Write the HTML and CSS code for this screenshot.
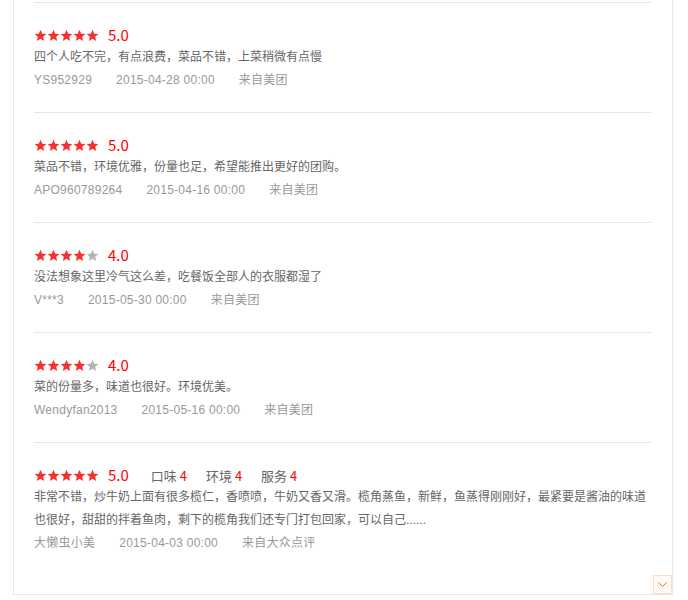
FILE: index.html
```html
<!DOCTYPE html>
<html lang="zh-CN">
<head>
<meta charset="utf-8">
<link rel="stylesheet" href="styles.css">
</head>
<body>
<svg width="0" height="0" class="defs">
  <defs>
    <symbol id="star" viewBox="0 0 24 24">
      <polygon points="12,1.5 15.1,8.6 22.8,9.3 17,14.4 18.7,22 12,18 5.3,22 7,14.4 1.2,9.3 8.9,8.6"/>
    </symbol>
  </defs>
</svg>
<div class="panel">
  <div class="item">
    <div class="rating">
      <span class="stars"><svg class="s on"><use href="#star"/></svg><svg class="s on"><use href="#star"/></svg><svg class="s on"><use href="#star"/></svg><svg class="s on"><use href="#star"/></svg><svg class="s on"><use href="#star"/></svg></span>
      <span class="score">5.0</span>
    </div>
    <p class="text">四个人吃不完，有点浪费，菜品不错，上菜稍微有点慢</p>
    <div class="meta"><span>YS952929</span><span>2015-04-28 00:00</span><span>来自美团</span></div>
  </div>
  <div class="item">
    <div class="rating">
      <span class="stars"><svg class="s on"><use href="#star"/></svg><svg class="s on"><use href="#star"/></svg><svg class="s on"><use href="#star"/></svg><svg class="s on"><use href="#star"/></svg><svg class="s on"><use href="#star"/></svg></span>
      <span class="score">5.0</span>
    </div>
    <p class="text">菜品不错，环境优雅，份量也足，希望能推出更好的团购。</p>
    <div class="meta"><span>APO960789264</span><span>2015-04-16 00:00</span><span>来自美团</span></div>
  </div>
  <div class="item">
    <div class="rating">
      <span class="stars"><svg class="s on"><use href="#star"/></svg><svg class="s on"><use href="#star"/></svg><svg class="s on"><use href="#star"/></svg><svg class="s on"><use href="#star"/></svg><svg class="s off"><use href="#star"/></svg></span>
      <span class="score">4.0</span>
    </div>
    <p class="text">没法想象这里冷气这么差，吃餐饭全部人的衣服都湿了</p>
    <div class="meta"><span>V***3</span><span>2015-05-30 00:00</span><span>来自美团</span></div>
  </div>
  <div class="item">
    <div class="rating">
      <span class="stars"><svg class="s on"><use href="#star"/></svg><svg class="s on"><use href="#star"/></svg><svg class="s on"><use href="#star"/></svg><svg class="s on"><use href="#star"/></svg><svg class="s off"><use href="#star"/></svg></span>
      <span class="score">4.0</span>
    </div>
    <p class="text">菜的份量多，味道也很好。环境优美。</p>
    <div class="meta"><span>Wendyfan2013</span><span>2015-05-16 00:00</span><span>来自美团</span></div>
  </div>
  <div class="item">
    <div class="rating">
      <span class="stars"><svg class="s on"><use href="#star"/></svg><svg class="s on"><use href="#star"/></svg><svg class="s on"><use href="#star"/></svg><svg class="s on"><use href="#star"/></svg><svg class="s on"><use href="#star"/></svg></span>
      <span class="score">5.0</span>
      <span class="sub">口味 <em>4</em></span>
      <span class="sub">环境 <em>4</em></span>
      <span class="sub">服务 <em>4</em></span>
    </div>
    <p class="text">非常不错，炒牛奶上面有很多榄仁，香喷喷，牛奶又香又滑。榄角蒸鱼，新鲜，鱼蒸得刚刚好，最紧要是酱油的味道也很好，甜甜的拌着鱼肉，剩下的榄角我们还专门打包回家，可以自己......</p>
    <div class="meta"><span>大懒虫小美</span><span>2015-04-03 00:00</span><span>来自大众点评</span></div>
  </div>
  <button class="more" type="button" aria-label="展开">
    <svg width="9" height="5" viewBox="0 0 9 5"><path d="M0.5 0.5 L4.5 4.5 L8.5 0.5" fill="none" stroke="#f60" stroke-width="1"/></svg>
  </button>
</div>
</body>
</html>
```
FILE: styles.css
```css
html, body {
  margin: 0;
  padding: 0;
  background: #fff;
}
body {
  font-family: "Liberation Sans", "Noto Sans CJK SC", sans-serif;
  font-size: 12px;
  color: #666;
}
.defs {
  position: absolute;
  width: 0;
  height: 0;
}
.panel {
  position: relative;
  box-sizing: border-box;
  width: 660px;
  margin-left: 13px;
  padding: 2px 20px 19px;
  border: 1px solid #e6e6e6;
  border-top: none;
}
.item {
  border-top: 1px solid #e6e6e6;
  padding: 21px 0 20px;
}
.rating {
  display: flex;
  align-items: center;
  height: 22px;
}
.stars {
  display: flex;
  width: 65px;
}
.s {
  width: 13px;
  height: 13px;
}
.s.on { fill: #f5302e; }
.s.off { fill: #b3b3b3; }
.score {
  margin-left: 9px;
  font-family: "Noto Sans CJK SC", sans-serif;
  font-size: 15px;
  line-height: 22px;
  color: #f00;
}
.sub {
  margin-left: 22px;
  font-size: 13px;
  color: #666;
  font-family: "Noto Sans CJK SC", sans-serif;
}
.sub + .sub { margin-left: 19px; }
.sub em {
  font-style: normal;
  color: #f00;
}
.text {
  margin: 0;
  line-height: 23px;
  color: #666;
}
.meta {
  display: flex;
  gap: 24px;
  line-height: 23px;
  letter-spacing: 0.25px;
  color: #999;
}
.more {
  position: absolute;
  right: 0;
  bottom: 0;
  width: 19px;
  height: 19px;
  padding: 0;
  border: 1px solid #f8dfcc;
  background: #fffaf6;
  display: flex;
  align-items: center;
  justify-content: center;
}
```
